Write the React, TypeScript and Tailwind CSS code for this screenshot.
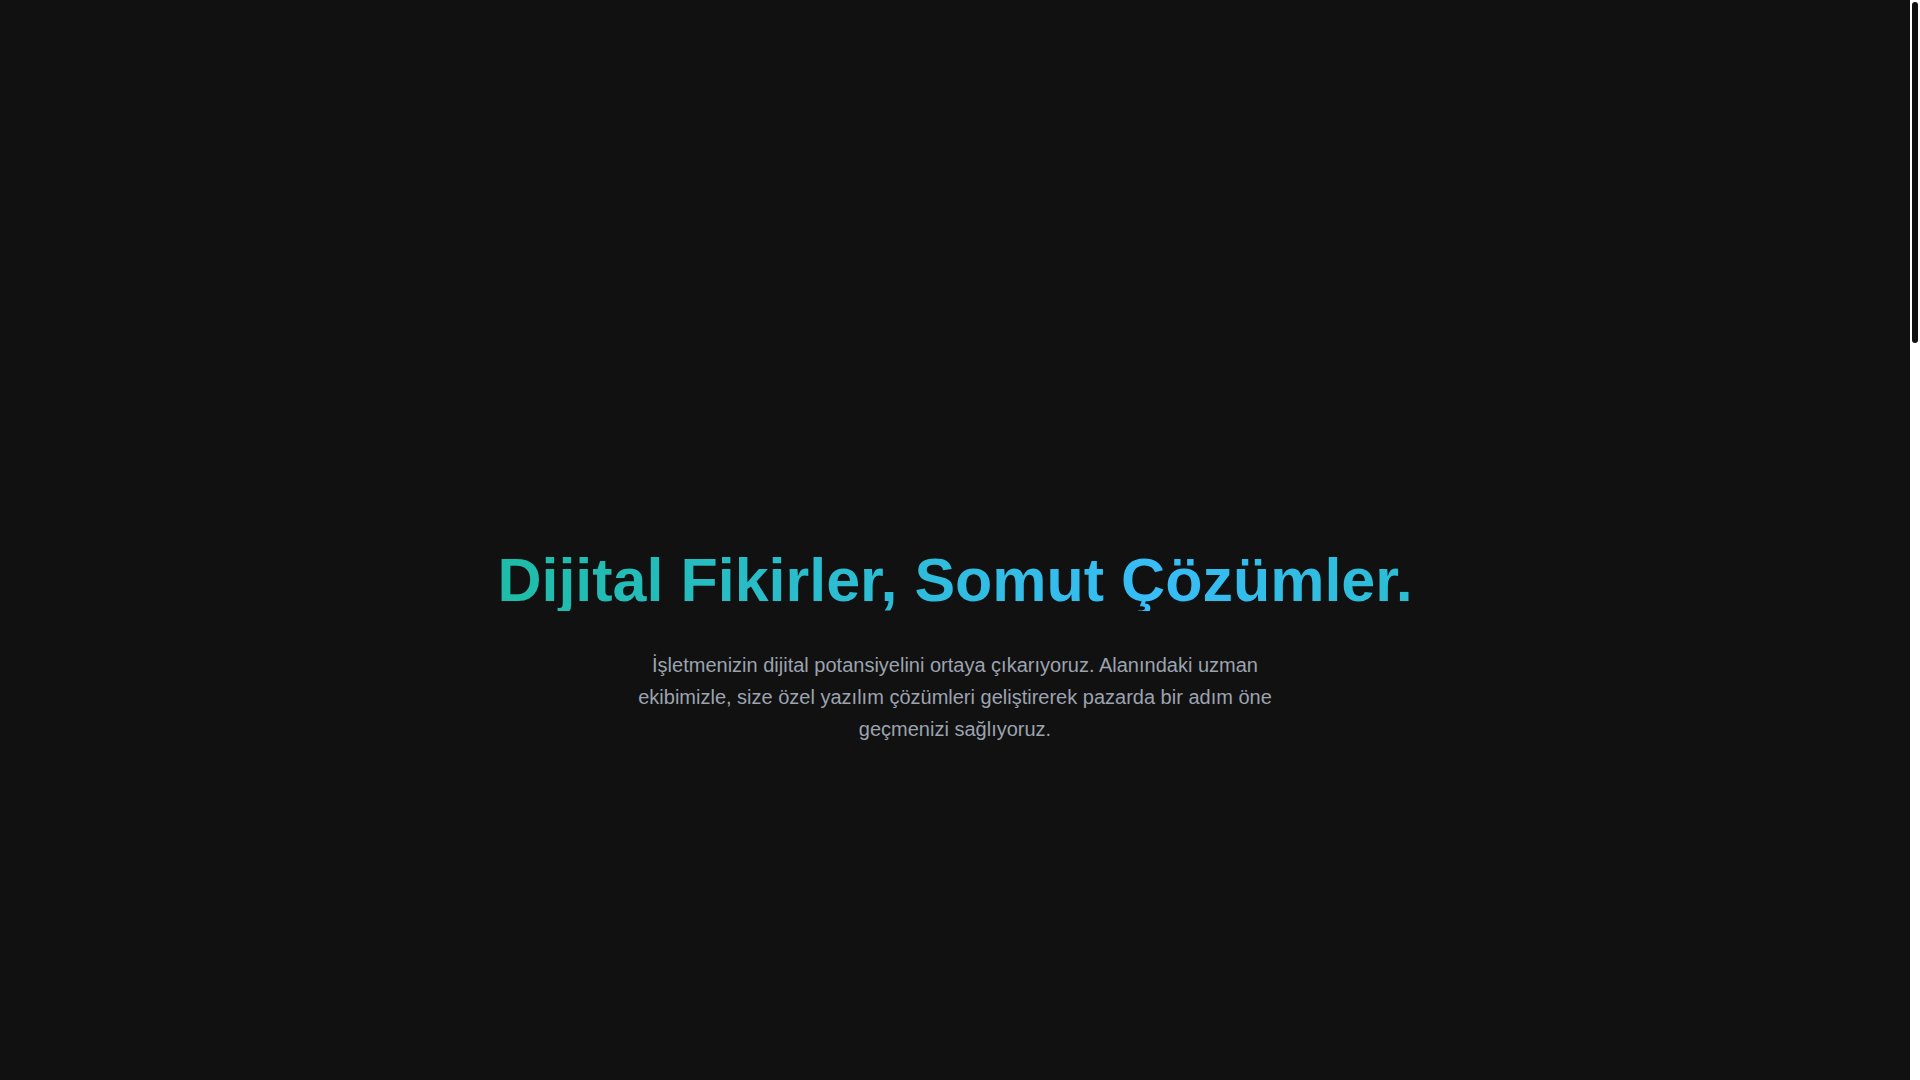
export default function App() {
  return (
    <div
      className="h-screen flex overflow-hidden bg-[#111111]"
      style={{ fontFamily: '"Liberation Sans", Arial, sans-serif' }}
    >
      {/* Main page */}
      <main className="flex-1 min-w-0">
        {/* Hero */}
        <section className="h-screen flex items-center justify-center pt-[214px] px-6">
          <div className="flex flex-col items-center text-center">
            <h1 className="w-fit text-[61px] leading-none font-bold mb-[38px] bg-[linear-gradient(90deg,#1ebca7_0%,#38bdf8_72%,#2bbdd2_100%)] bg-clip-text text-transparent">
              Dijital Fikirler, Somut Çözümler.
            </h1>
            <p className="max-w-2xl text-xl leading-8 text-[#9ca3af]">
              İşletmenizin dijital potansiyelini ortaya çıkarıyoruz. Alanındaki uzman ekibimizle, size özel yazılım
              çözümleri geliştirerek pazarda bir adım öne geçmenizi sağlıyoruz.
            </p>
          </div>
        </section>
      </main>

      {/* Page scrollbar */}
      <div className="w-[10px] shrink-0 bg-white px-[2px] pt-[2px]">
        <div className="h-[341px] rounded-full bg-[#111111]" />
      </div>
    </div>
  );
}
